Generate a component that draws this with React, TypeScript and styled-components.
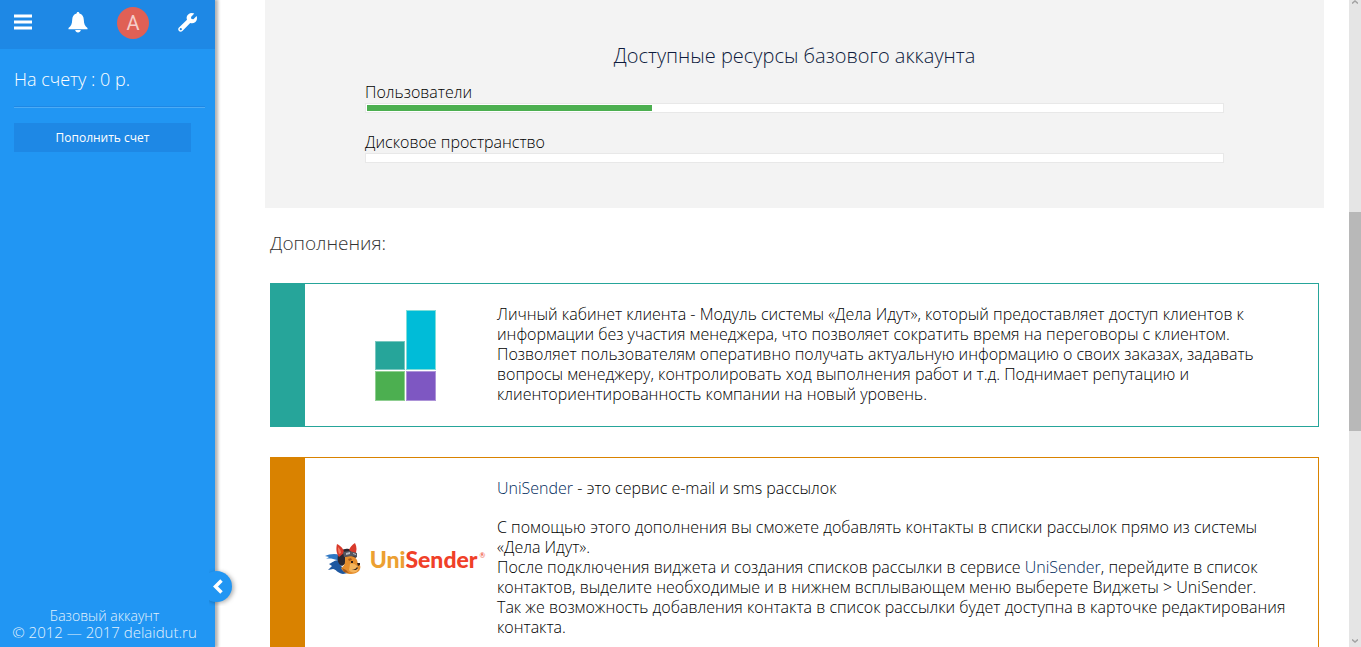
import React from 'react';
import styled, { createGlobalStyle } from 'styled-components';

const GlobalStyle = createGlobalStyle`
  *, *::before, *::after { box-sizing: border-box; }
  body {
    margin: 0;
    background: #fff;
    color: #000;
    font: 300 16px/20px "Open Sans", "Noto Sans", sans-serif;
  }
  h1, h2, p { margin: 0; }
`;

const Page = styled.div`
  display: flex;
  height: 100vh;
  overflow: hidden;
`;

const Sidebar = styled.aside`
  position: relative;
  z-index: 1;
  display: flex;
  flex-direction: column;
  flex: none;
  width: 215px;
  background: #2196f3;
  color: #fff;
  box-shadow: 2px 0 3px 1px rgba(0, 0, 0, 0.3);
`;

const TopBar = styled.nav`
  display: flex;
  align-items: flex-start;
  justify-content: space-between;
  height: 49px;
  padding: 7px 18px 0 14px;
  background: #1e88e5;
`;

const IconButton = styled.button`
  display: flex;
  align-items: center;
  justify-content: center;
  height: 30px;
  padding: 0;
  border: 0;
  background: none;
  color: #fff;
  cursor: pointer;
`;

const MenuButton = styled(IconButton)`
  justify-content: flex-start;
  width: 25px;
`;

const Avatar = styled(IconButton)`
  width: 32px;
  height: 32px;
  border-radius: 50%;
  background: #e06055;
  color: #f6cdc9;
  font: 400 20px/32px Roboto, sans-serif;
`;

const Balance = styled.p`
  margin: 0 10px 0 14px;
  padding: 18px 0 15px;
  border-bottom: 1px solid #1e88e5;
  box-shadow: 0 1px #4dabf5;
  font-size: 18px;
  line-height: 24px;
`;

const TopUp = styled.button`
  height: 29px;
  margin: 16px 24px 0 14px;
  padding: 0;
  border: 0;
  background: #1e88e5;
  color: #fff;
  font: 400 12px/29px "Open Sans", sans-serif;
  cursor: pointer;
`;

const SidebarFooter = styled.footer`
  margin-top: auto;
  padding: 0 6px 6px 0;
  color: #e3f2fd;
  font-size: 14px;
  line-height: 17px;
  text-align: center;
`;

const Copyright = styled.p`
  font-size: 15px;
`;

const Collapse = styled.button`
  position: absolute;
  right: -17px;
  bottom: 45px;
  display: flex;
  align-items: center;
  width: 31px;
  height: 31px;
  padding: 0 0 0 11px;
  border: 0;
  border-radius: 50%;
  background: #2196f3;
  color: #fff;
  cursor: pointer;
  filter: drop-shadow(2px 1px 2px rgba(0, 0, 0, 0.3));
  clip-path: inset(-4px -8px -4px 8px);
`;

const Main = styled.main`
  flex: 1;
  min-width: 0;
  padding: 0 25px 0 50px;
`;

const Resources = styled.section`
  height: 208px;
  padding: 42px 100px 0;
  background: #f3f3f3;
`;

const ResourcesTitle = styled.h1`
  margin-bottom: 13px;
  color: #0e1b3d;
  font-size: 20px;
  line-height: 27px;
  font-weight: 300;
  text-align: center;
`;

const Resource = styled.div`
  margin-bottom: 19px;
`;

const Track = styled.div`
  height: 10px;
  margin-top: 1px;
  padding: 1px;
  border: 1px solid #e8e8e8;
  background: #fff;
`;

const Fill = styled.div`
  height: 6px;
  background: #4caf50;
`;

const Addons = styled.section`
  display: flex;
  flex-direction: column;
  gap: 30px;
  padding: 22px 5px 0;
`;

const AddonsTitle = styled.h2`
  margin-bottom: -4px;
  color: #333;
  font-size: 19px;
  line-height: 27px;
  font-weight: 300;
`;

const Card = styled.article<{ $color: string }>`
  display: flex;
  align-items: center;
  border: 1px solid ${(p) => p.$color};
  border-left-width: 35px;
`;

const CardLogo = styled.div`
  display: flex;
  flex: none;
  align-items: center;
  justify-content: center;
  gap: 9px;
  width: 192px;
  padding-left: 8px;
`;

const CardText = styled.div`
  flex: 1;
  padding: 20px 25px 22px 0;
`;

const Lead = styled.p`
  && { margin-bottom: 19px; }
`;

const Link = styled.a`
  color: #002b5c;
  text-decoration: none;
`;

const Wordmark = styled.span`
  color: #f04028;
  font: 900 23px/30px Lato, sans-serif;
  white-space: nowrap;
`;

const WordmarkLead = styled.span`
  color: #eca032;
`;

const Registered = styled.sup`
  margin-left: 2px;
  font-size: 7px;
  line-height: 7px;
  font-weight: 400;
  vertical-align: 10px;
`;

const ScrollBar = styled.div`
  display: grid;
  grid-template-rows: 212fr 219fr 216fr;
  flex: none;
  width: 12px;
  background: #e5e5e5;
  color: #a3a3a3;
`;

const Thumb = styled.div`
  background: #b8b8b8;
`;

const ArrowCell = styled.div<{ $end?: boolean }>`
  display: flex;
  justify-content: center;
  align-items: ${(p) => (p.$end ? 'flex-end' : 'flex-start')};
  padding-bottom: 4px;
`;

const MenuIcon = () => (
  <svg width="18" height="16" viewBox="0 0 18 16" fill="currentColor" aria-hidden="true">
    <path d="M0 0.5h18v3H0zM0 6.5h18v3H0zM0 12.5h18v3H0z" />
  </svg>
);

const BellIcon = () => (
  <svg width="20" height="21" viewBox="0 0 20 21" fill="currentColor" aria-hidden="true">
    <path d="M10 0c.9 0 1.400.6 1.400 1.500 2.900.7 4.300 3 4.400 6.200.1 4.300 1.100 6.500 3.700 8.200v1.300H.5v-1.300c2.600-1.700 3.600-3.900 3.700-8.200.1-3.200 1.500-5.500 4.400-6.200C8.600.6 9.100 0 10 0zM7.200 18h5.600c-.2 1.500-1.300 2.500-2.800 2.500S7.400 19.500 7.200 18z" />
  </svg>
);

const WrenchIcon = () => (
  <svg width="19" height="19" viewBox="0 0 19 19" aria-hidden="true">
    <path
      fill="currentColor"
      fillRule="evenodd"
      d="M16.300.6 13 3.900l.4 2 2 .4 3.200-3.200c.9 2.400.2 4.900-1.500 6.200-1.500 1.200-3.400 1.300-4.900.7l-7.800 7.900c-1 1-2.500 1-3.500.1-1-1-.9-2.500.1-3.500l8-7.800C8.200 4.700 8.700 2.700 10.200 1.400 12 0 14.300-.3 16.300.6zM2.800 15.100a1.100 1.100 0 1 0 0 2.200 1.100 1.100 0 0 0 0-2.200z"
    />
  </svg>
);

const ChevronIcon = () => (
  <svg width="12" height="16" viewBox="0 0 12 16" fill="none" aria-hidden="true">
    <path d="M9.500 1.500 3.500 7.500l6 6" stroke="currentColor" strokeWidth="3.500" />
  </svg>
);

const ArrowIcon = ({ down = false }: { down?: boolean }) => (
  <svg width="6" height="4" viewBox="0 0 6 4" fill="none" aria-hidden="true">
    <path d={down ? 'M0 .5 3 3 6 .5' : 'M0 3.500 3 1l3 2.500'} stroke="currentColor" strokeWidth="1.500" />
  </svg>
);

const BlocksLogo = () => (
  <svg width="61" height="91" viewBox="0 0 61 91" role="img" aria-label="Личный кабинет клиента">
    <path fill="#7fded9" d="M31 0h30v60H31z" />
    <path fill="#00bcd8" d="M32 1h28v58H32z" />
    <path fill="#78c7bf" d="M0 31h30v29H0z" />
    <path fill="#26a59a" d="M1 32h28v27H1z" />
    <path fill="#8fce91" d="M0 61h30v30H0z" />
    <path fill="#4caf50" d="M1 62h28v28H1z" />
    <path fill="#ad94d8" d="M31 61h30v30H31z" />
    <path fill="#7e57c2" d="M32 62h28v28H32z" />
  </svg>
);

const DogLogo = () => (
  <svg width="36" height="32" viewBox="0 0 36 32" aria-hidden="true">
    <path fill="#2f78c4" d="M0 13c4-2 10-3 15-1l2 6-5-1c-4-1-7-2-11-1l3-2z" />
    <path fill="#1d57a0" d="M4 21c3-1 5-4 10-4l2 6 7 7-5 1c-6-1-7-5-10-5l-5 1 4-4z" />
    <path fill="#2b2730" d="M13 12c2-5 6-7 11-6 5 0 8 3 8 8l-6 3-9 6c-4-2-5-6-4-11z" />
    <path fill="#e58e2d" d="M20 14c5-2 10-1 12 3l1 4c3 1 3 4 1 7-2 2-5 3-8 3-4 0-8-2-10-6 2-1 4-4 4-6z" />
    <path fill="#f4b45c" d="M25 21c3-1 5 0 7 2 2 2 1 5-1 6-3 1-6 0-7-2z" />
    <path fill="#a55a1c" d="m17 25 4 2 3 3-5-1zM23 16l3-1 1 2-3 1z" />
    <path fill="#d83a2b" d="M12 1c4 2 7 5 7 9l-5 4c-3-4-3-9-2-13zM30 0c2 4 2 8 0 12l-6-5c1-3 3-5 6-7z" />
    <path fill="#f27a5c" d="M13 4c2 2 3 4 3 6l-2 1c-1-2-1-5-1-7z" />
    <path fill="#555862" d="m18 9 6-1 8 2v4l-5-1-8 1z" />
    <path fill="#b7bac2" d="m21 10 4-1v2l-4 1zM28 10l3 1v1l-3-1z" />
    <path fill="#30201b" d="M32 20h3v2l-2 1zM26 18h2v2h-2zM27 26c2 1 4 0 5-2l1 1c-1 2-4 3-6 1z" />
  </svg>
);

const resources = [
  { label: 'Пользователи', percent: 33.33 },
  { label: 'Дисковое пространство', percent: 0 },
];

export default function App() {
  return (
    <>
      <GlobalStyle />
      <Page>
        <Sidebar>
          <TopBar>
            <MenuButton aria-label="Меню"><MenuIcon /></MenuButton>
            <IconButton aria-label="Уведомления"><BellIcon /></IconButton>
            <Avatar>A</Avatar>
            <IconButton aria-label="Настройки"><WrenchIcon /></IconButton>
          </TopBar>
          <Balance>На счету : 0 р.</Balance>
          <TopUp>Пополнить счет</TopUp>
          <SidebarFooter>
            <p>Базовый аккаунт</p>
            <Copyright>© 2012 — 2017 delaidut.ru</Copyright>
          </SidebarFooter>
          <Collapse aria-label="Свернуть"><ChevronIcon /></Collapse>
        </Sidebar>

        <Main>
          <Resources>
            <ResourcesTitle>Доступные ресурсы базового аккаунта</ResourcesTitle>
            {resources.map(({ label, percent }) => (
              <Resource key={label}>
                <p>{label}</p>
                <Track role="progressbar" aria-label={label} aria-valuenow={percent}>
                  <Fill style={{ width: `${percent}%` }} />
                </Track>
              </Resource>
            ))}
          </Resources>

          <Addons>
            <AddonsTitle>Дополнения:</AddonsTitle>
            <Card $color="#26a59a">
              <CardLogo><BlocksLogo /></CardLogo>
              <CardText>
                <p>
                  Личный кабинет клиента - Модуль системы «Дела Идут», который предоставляет доступ клиентов к
                  информации без участия менеджера, что позволяет сократить время на переговоры с клиентом.
                </p>
                <p>
                  Позволяет пользователям оперативно получать актуальную информацию о своих заказах, задавать
                  вопросы менеджеру, контролировать ход выполнения работ и т.д. Поднимает репутацию и
                  клиенториентированность компании на новый уровень.
                </p>
              </CardText>
            </Card>
            <Card $color="#d98200">
              <CardLogo>
                <DogLogo />
                <Wordmark>
                  <WordmarkLead>Uni</WordmarkLead>Sender<Registered>®</Registered>
                </Wordmark>
              </CardLogo>
              <CardText>
                <Lead><Link href="#unisender">UniSender</Link> - это сервис e-mail и sms рассылок</Lead>
                <p>С помощью этого дополнения вы сможете добавлять контакты в списки рассылок прямо из системы «Дела Идут».</p>
                <p>
                  После подключения виджета и создания списков рассылки в сервисе{' '}
                  <Link href="#unisender">UniSender</Link>, перейдите в список контактов, выделите необходимые и в
                  нижнем всплывающем меню выберете Виджеты &gt; UniSender.
                </p>
                <p>Так же возможность добавления контакта в список рассылки будет доступна в карточке редактирования контакта.</p>
              </CardText>
            </Card>
          </Addons>
        </Main>

        <ScrollBar aria-hidden="true">
          <ArrowCell><ArrowIcon /></ArrowCell>
          <Thumb />
          <ArrowCell $end><ArrowIcon down /></ArrowCell>
        </ScrollBar>
      </Page>
    </>
  );
}
